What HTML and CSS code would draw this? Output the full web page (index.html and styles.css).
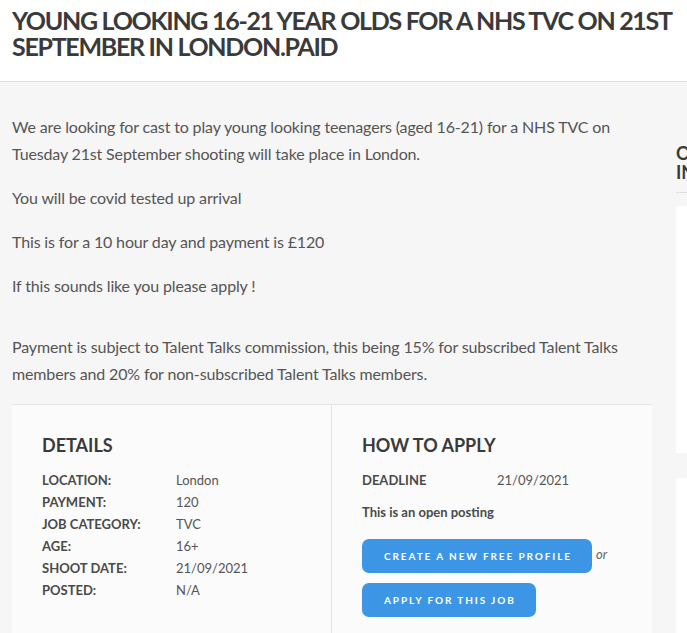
FILE: index.html
```html
<!DOCTYPE html>
<html lang="en">
<head>
    <meta charset="UTF-8">
    <meta name="viewport" content="width=device-width, initial-scale=1.0">
    <title>Young looking 16-21 year olds for a NHS TVC</title>
    <link rel="stylesheet" href="styles.css">
</head>
<body>
    <div class="page-header">
        <h1>YOUNG LOOKING 16-21 YEAR OLDS FOR A NHS TVC ON 21ST SEPTEMBER IN LONDON.PAID</h1>
    </div>

    <div class="layout">
        <div class="main">
            <div class="description">
                <p>We are looking for cast to play young looking teenagers (aged 16-21) for a NHS TVC on Tuesday 21st September shooting will take place in London.</p>
                <p>You will be covid tested up arrival</p>
                <p>This is for a 10 hour day and payment is £120</p>
                <p>If this sounds like you please apply !</p>
                <p class="commission">Payment is subject to Talent Talks commission, this being 15% for subscribed Talent Talks members and 20% for non-subscribed Talent Talks members.</p>
            </div>

            <div class="job-box">
                <div class="job-col">
                    <h3>DETAILS</h3>
                    <div class="row"><span class="label">LOCATION:</span><span class="value">London</span></div>
                    <div class="row"><span class="label">PAYMENT:</span><span class="value">120</span></div>
                    <div class="row"><span class="label">JOB CATEGORY:</span><span class="value">TVC</span></div>
                    <div class="row"><span class="label">AGE:</span><span class="value">16+</span></div>
                    <div class="row"><span class="label">SHOOT DATE:</span><span class="value">21/09/2021</span></div>
                    <div class="row"><span class="label">POSTED:</span><span class="value">N/A</span></div>
                </div>
                <div class="job-col apply">
                    <h3>HOW TO APPLY</h3>
                    <div class="row deadline"><span class="label">DEADLINE</span><span class="value">21/09/2021</span></div>
                    <p class="open">This is an open posting</p>
                    <div class="btn-line"><a class="btn" href="#">CREATE A NEW FREE PROFILE</a><em>or</em></div>
                    <div class="btn-line"><a class="btn" href="#">APPLY FOR THIS JOB</a></div>
                </div>
            </div>
        </div>

        <div class="sidebar">
            <h2>OTHER JOBS IN THIS CATEGORY<br>IN LONDON</h2>
            <div class="side-card"></div>
            <div class="side-card"></div>
        </div>
    </div>
</body>
</html>
```

FILE: styles.css
```css
html, body {
    overflow: hidden;
}

body {
    margin: 0;
    padding: 0;
    background: #f6f6f6;
    font-family: Lato, sans-serif;
    color: #555;
}

.page-header {
    background: white;
    border-bottom: 1px solid #e3e3e3;
    padding: 7px 12px 0;
    height: 74px;
}

.page-header h1 {
    margin: 0;
    font-size: 25px;
    line-height: 26px;
    font-weight: 700;
    color: #3a3a3a;
    letter-spacing: -1.3px;
}

.layout {
    display: flex;
    gap: 24px;
    padding: 0 12px;
    width: 1100px;
}

.main {
    flex: 0 0 640px;
}

.description {
    padding-top: 31px;
}

.description p {
    margin: 0 0 17px;
    font-size: 16px;
    line-height: 27px;
    letter-spacing: -0.15px;
}

.description p.commission {
    margin-top: 34px;
    margin-bottom: 0;
}

.job-box {
    display: flex;
    margin-top: 17px;
    background: #fbfbfb;
    border-top: 1px solid #e4e4e4;
}

.job-col {
    flex: 0 0 319px;
    padding: 28px 30px 24px;
    box-sizing: border-box;
}

.job-col.apply {
    flex: 1;
    border-left: 1px solid #e4e4e4;
}

.job-col h3 {
    margin: 0 0 12px;
    font-size: 18px;
    line-height: 24px;
    font-weight: 700;
    color: #3a3a3a;
}

.row {
    display: flex;
    font-size: 13px;
    line-height: 22px;
}

.row .label {
    width: 134px;
    font-weight: 700;
    color: #4a4a4a;
}

.row .value {
    color: #555;
}

.deadline .label {
    width: 135px;
}

.open {
    margin: 10px 0 16px;
    font-size: 13px;
    line-height: 22px;
    font-weight: 700;
    color: #4a4a4a;
}

.btn-line {
    display: flex;
    align-items: center;
    margin-bottom: 10px;
}

.btn {
    display: inline-block;
    white-space: nowrap;
    background: #3d95e6;
    color: white;
    text-decoration: none;
    font-size: 10px;
    font-weight: 700;
    letter-spacing: 1.9px;
    line-height: 34px;
    padding: 0 20px 0 22px;
    border-radius: 7px;
}

.btn-line em {
    margin-left: 4px;
    margin-top: -4px;
    font-size: 13px;
    color: #666;
}

.sidebar {
    flex: 0 0 300px;
    padding-top: 62px;
}

.sidebar h2 {
    margin: 0;
    font-size: 18px;
    line-height: 19px;
    font-weight: 700;
    color: #3a3a3a;
    padding-bottom: 10px;
    border-bottom: 1px solid #e0e0e0;
}

.side-card {
    background: white;
    height: 247px;
    margin-top: 13px;
}

.side-card + .side-card {
    margin-top: 25px;
}
```
